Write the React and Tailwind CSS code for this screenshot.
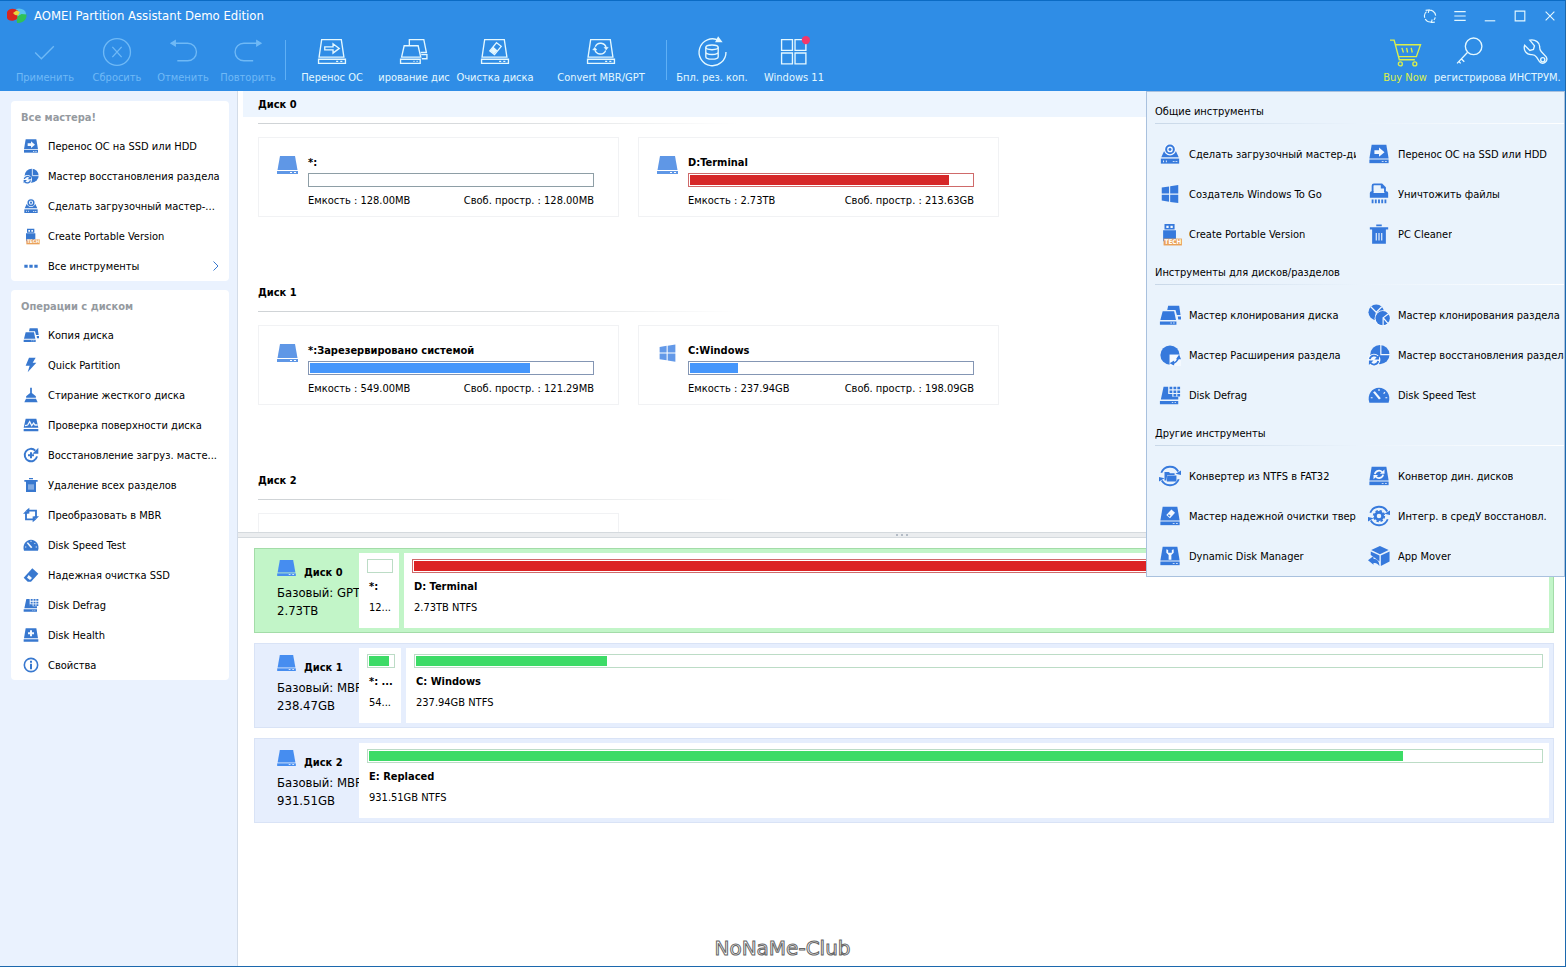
import React from "react";

const WHITE = "#f4f9ff";

const Drive = ({ children }) => (
  <>
    <path d="M4 2h16l2.500 15h-21z" fill="currentColor" />
    <path d="M1.500 18h21v4h-21z" fill="currentColor" />
    <path d="M15 19.500h2v1h-2zM18.500 19.500h2v1h-2z" fill={WHITE} />
    {children}
  </>
);

const Tech = () => (
  <>
    <rect x="5" y="17" width="20" height="7.500" fill="#eaa25a" />
    <text x="6" y="23.200" fontSize="7" fontWeight="bold" fill="#fff">
      TECH
    </text>
  </>
);

const glyphs = {
  transfer: (
    <Drive>
      <path d="M7 8h5V5l6 5-6 5v-3H7z" fill={WHITE} />
    </Drive>
  ),
  recovery: (
    <>
      <circle cx="13" cy="11.500" r="10.500" fill="currentColor" />
      <path d="M14 0v11.500h10" fill="none" stroke={WHITE} strokeWidth="1.300" />
      <circle cx="6.500" cy="17.500" r="7" fill={WHITE} />
      <path d="M2 16.500a4.800 4.800 0 0 1 8.500-2M11.200 18.500a4.800 4.800 0 0 1-8.500 2" fill="none" stroke="currentColor" strokeWidth="1.900" />
      <path d="M12 12v5H7zM1 23v-5h5z" fill="currentColor" />
    </>
  ),
  bootable: (
    <>
      <path d="M5.500 9L2.500 15.500h19L18.500 9z" fill="currentColor" />
      <circle cx="12" cy="7" r="6.500" fill={WHITE} />
      <circle cx="12" cy="7" r="4.200" fill="none" stroke="currentColor" strokeWidth="2.200" />
      <circle cx="12" cy="7" r="1.600" fill="currentColor" />
      <path d="M2 17h20v5.500H2z" fill="currentColor" />
      <path d="M4.500 19h1v2h-1zM7.500 19h1v2h-1zM15 19.500h2v1h-2zM18 19.500h2v1h-2z" fill={WHITE} />
    </>
  ),
  windows: (
    <path d="M3 5l8-1.200v7.700H3zM12.200 3.600L21 2.300v9.200h-8.800zM3 12.700h8v7.700L3 19.200zM12.200 12.700H21v9.200l-8.800-1.300z" fill="currentColor" />
  ),
  portable: (
    <>
      <path d="M6 1h11v6H6zM4.500 8h14v12h-14z" fill="currentColor" />
      <path d="M8 3h2.500v2.500H8zM12.500 3H15v2.500h-2.500z" fill={WHITE} />
      <Tech />
    </>
  ),
  shredder: (
    <>
      <path d="M5 10V3a1.500 1.500 0 0 1 1.500-1.500H15L18.500 5v5" fill="none" stroke="currentColor" strokeWidth="2" />
      <path d="M14 1v5h5z" fill="currentColor" />
      <path d="M4 9h2v2h12V9h2a2 2 0 0 1 2 2v5H2v-5a2 2 0 0 1 2-2z" fill="currentColor" />
      <path d="M5 18v4M8.500 18v4M12 18v4M15.500 18v4M19 18v4" stroke="currentColor" strokeWidth="2" />
    </>
  ),
  trash: (
    <>
      <path d="M9 1.500h6v2H9zM2 4.500h20v2.500H2zM4.500 7h15v15.500h-15z" fill="currentColor" />
      <path d="M9 11v8M12 11v8M15 11v8" stroke={WHITE} strokeWidth="1.200" />
    </>
  ),
  cloneDisk: (
    <>
      <path d="M10 2h12l1.500 10h-4L18 6.500H9zM20.500 13.500H24V17h-3z" fill="currentColor" />
      <path d="M4 8h12.500l2 9.500H1.500zM1 19h18v3.500H1z" fill="currentColor" />
      <path d="M12.500 20.200h1.500v1h-1.500zM15.500 20.200H17v1h-1.500z" fill={WHITE} />
    </>
  ),
  clonePartition: (
    <>
      <circle cx="9" cy="9" r="8.500" fill="currentColor" />
      <path d="M9 9L3 3M9 9l6-6M9 9v9" stroke={WHITE} strokeWidth="1.300" />
      <circle cx="16" cy="15.500" r="8.800" fill={WHITE} />
      <circle cx="16" cy="15.500" r="7.800" fill="currentColor" />
      <path d="M23 10l-6.500 5L22 21.500M16.500 15v9" fill="none" stroke={WHITE} strokeWidth="1.300" />
    </>
  ),
  extend: (
    <>
      <circle cx="12" cy="12" r="10.500" fill="currentColor" />
      <path d="M11.500 11.500H24V24H11.500z" fill={WHITE} />
      <path d="M14 21.500a10 10 0 0 0 7.500-7.500" fill="none" stroke="currentColor" strokeWidth="1.700" />
      <path d="M11.500 21l5-3v5.500zM22 11.500l2 5h-5.500z" fill="currentColor" />
    </>
  ),
  defrag: (
    <>
      <path d="M5 3h5v11h11v3H2zM1 18.500h20v3.500H1z" fill="currentColor" />
      <path d="M11.500 3h3v2.800h-3zM15.800 3h3v2.800h-3zM20 3h3v2.800h-3zM11.500 7h3v2.800h-3zM15.800 7h3v2.800h-3zM20 7h3v2.800h-3zM15.800 11h3v2.500h-3zM20 11h3v2.500h-3zM9.500 11h5v4h-5z" fill="currentColor" />
      <path d="M14 19.800h1.500v1H14zM17 19.800h1.500v1H17z" fill={WHITE} />
    </>
  ),
  speed: (
    <>
      <path d="M1.500 20.500c-3-9 3-16.500 10.500-16.500s13.500 7.500 10.500 16.500z" fill="currentColor" />
      <path d="M5.500 9l2-1 6.500 7.500-2 1.500z" fill={WHITE} />
      <path d="M12 5.500v2M18.500 9L17 10.500M21 15h-2M3 15h2" stroke={WHITE} strokeWidth="1.300" />
    </>
  ),
  convertFolder: (
    <>
      <path d="M2.500 8.500A10.300 10.300 0 0 1 21 7M21.500 15.500A10.300 10.300 0 0 1 3 17" fill="none" stroke="currentColor" strokeWidth="2" />
      <path d="M18 9.500l6-3.500v5zM6 14.500L0 18v-5z" fill="currentColor" />
      <path d="M6 7.500h5l1 1.500h5v2H9l-1 6H6z" fill="currentColor" />
      <path d="M9 11.500h10V18H8.500z" fill="currentColor" />
    </>
  ),
  convertDisk: (
    <Drive>
      <path d="M7.500 10A4.500 4.500 0 0 1 15.500 8M16.500 10.500a4.500 4.500 0 0 1-8 2" fill="none" stroke={WHITE} strokeWidth="1.900" />
      <path d="M13 9.500h5V5zM11 11H6v4.500z" fill={WHITE} />
    </Drive>
  ),
  wipeDisk: (
    <Drive>
      <path d="M13.500 5l4 3.500-5.500 6-4-3.500z" fill={WHITE} />
      <path d="M10.800 10l1.800 1.600-1.200 1.200-1.700-1.500z" fill="currentColor" />
    </Drive>
  ),
  integrate: (
    <>
      <path d="M2.500 8.500A10.300 10.300 0 0 1 21 7M21.500 15.500A10.300 10.300 0 0 1 3 17" fill="none" stroke="currentColor" strokeWidth="2" />
      <path d="M18 9.500l6-3.500v5zM6 14.500L0 18v-5z" fill="currentColor" />
      <circle cx="12" cy="12" r="4" fill="none" stroke="currentColor" strokeWidth="3" />
      <circle cx="12" cy="12" r="5.800" fill="none" stroke="currentColor" strokeWidth="1.800" strokeDasharray="2.600 1.950" />
    </>
  ),
  dynamic: (
    <Drive>
      <path d="M8 4.500v4L10.500 11v5h3v-5L16 8.500v-4l-2 1v3h-4v-3z" fill={WHITE} />
    </Drive>
  ),
  mover: (
    <>
      <path d="M13 1l9.500 4.500L13 10 3.500 5.500zM23.500 7v11L14 23V11.500zM3 7l9.500 4.500V18L8 14.500 3 11z" fill="currentColor" />
      <path d="M0 16.500L6 12v3c4 0 6.500 3 6.500 8-2-3-4-3.500-6.500-3.500v2z" fill="currentColor" />
    </>
  ),
  bolt: <path d="M9 1h10l-4.500 7.500H20L7 23l3-10H4z" fill="currentColor" />,
  broom: (
    <path d="M10.700 1h2.600v8l6 5v2H4.700v-2l6-5zM4.500 17.500h15L22 23H2z" fill="currentColor" />
  ),
  surface: (
    <>
      <path d="M4 2.500h16L23 16H1zM1 18h22v3.500H1z" fill="currentColor" />
      <path d="M3 13l4-1 3-5 3 6 3-4 2 3h4" fill="none" stroke={WHITE} strokeWidth="1.900" />
    </>
  ),
  bootRepair: (
    <>
      <path d="M18.500 5.500A9.300 9.300 0 1 0 21 14" fill="none" stroke="currentColor" strokeWidth="2.900" />
      <path d="M23 1v9h-9zM10.500 8h3v3h3v3h-3v3h-3v-3h-3v-3h3z" fill="currentColor" />
    </>
  ),
  convertMbr: (
    <>
      <path d="M9 5.500h10.500V15M15 18.500H4.500V8" fill="none" stroke="currentColor" strokeWidth="2.800" />
      <path d="M9.500 1v9L4 5.500zM14.500 14v9l5.500-4.500zM15 14h9l-4.500 4.500zM0 10h9L4.500 5.500z" fill="currentColor" />
    </>
  ),
  eraser: (
    <>
      <path d="M14 2l9 8-11 12H7l-6-6z" fill="currentColor" />
      <path d="M8.500 12l5 4.500-3 3L6 16z" fill={WHITE} />
    </>
  ),
  health: (
    <>
      <path d="M4 2h16l2.500 15h-21zM1 18.500h22V22H1z" fill="currentColor" />
      <path d="M10.500 5h3v3h3v3h-3v3h-3v-3h-3V8h3z" fill={WHITE} />
    </>
  ),
  info: (
    <>
      <circle cx="12" cy="12" r="10" fill="none" stroke="currentColor" strokeWidth="2.400" />
      <path d="M10.500 5.500h3v3h-3zM10.500 10h3v8.500h-3z" fill="currentColor" />
    </>
  ),
  dots: <path d="M2 10h5v4.500H2zM9.500 10h5v4.500h-5zM17 10h5v4.500h-5z" fill="currentColor" />,
};

const Glyph = ({ name, className }) => (
  <svg viewBox="0 0 24 24" className={`overflow-visible ${className}`} aria-hidden="true">
    {glyphs[name]}
  </svg>
);

const LineDrive = ({ children }) => (
  <>
    <path d="M4.500 2.500h19l2.500 17H2zM1.500 21.500h26v4h-26z" />
    <path d="M18.500 23.500h2M22.500 23.500h2" />
    {children}
  </>
);

const lineGlyphs = {
  apply: <path d="M5 15l6 6L23 9" />,
  discard: (
    <>
      <circle cx="14.500" cy="14.500" r="13" />
      <path d="M10 9.500l9 10M19 9.500l-9 10" />
    </>
  ),
  undo: (
    <>
      <path d="M6 6h13a8.500 8.500 0 0 1 0 17H9" />
      <path d="M7 3.500v5L3 6z" fill="currentColor" />
    </>
  ),
  redo: (
    <>
      <path d="M24 6H10.500a8.500 8.500 0 0 0 0 17h9" />
      <path d="M23 3.500v5l4-2.500z" fill="currentColor" />
    </>
  ),
  transfer: (
    <LineDrive>
      <path d="M7.500 9.500h8v-3l6 4.500-6 4.500v-3h-8z" />
    </LineDrive>
  ),
  clone: (
    <>
      <path d="M5 8.500h13.500l2.500 11H2.500zM1.500 21.500h19v4h-19zM14 23.500h1M17 23.500h1M10 8V2.500h14l2.500 12.500H21M21.500 17h5.500v4h-5" />
    </>
  ),
  wipe: (
    <LineDrive>
      <path d="M16 5.500l4.500 3.500-6.500 8-4.500-3.500z" />
      <path d="M13 10.500l3 2.500-2.500 2.500-2.500-2z" fill="currentColor" />
    </LineDrive>
  ),
  convert: (
    <LineDrive>
      <path d="M9 9.500a5.500 5.500 0 0 1 10.500 1M19 13a5.500 5.500 0 0 1-10.500-1" />
      <path d="M17.500 10h4l-2 2.500zM6.500 12.500h4l-2-2.500z" fill="currentColor" strokeWidth=".5" />
    </LineDrive>
  ),
  backup: (
    <>
      <path d="M21 3.200A13 13 0 1 0 28 14.500" />
      <path d="M18.500 4.500h5L20.500.500z" fill="currentColor" />
      <ellipse cx="14.500" cy="10" rx="6" ry="2.300" />
      <path d="M8.500 10v9c0 3.200 12 3.200 12 0v-9M8.500 14.500c0 3.200 12 3.200 12 0" />
    </>
  ),
  win11: (
    <>
      <path d="M2.500 2.500H13V13H2.500zM15.500 2.500H26V13H15.500zM2.500 15.500H13V26H2.500zM15.500 15.500H26V26H15.500z" />
      <circle cx="26" cy="3" r="4" fill="#f2386b" stroke="none" />
    </>
  ),
  cart: (
    <>
      <path d="M0 3h4l5 19h15M5 7.500h24.500l-4 11.500H8.500M11.500 10.500l1.500 4.500M16 10.500l1 4.500M20.500 10.500l1 4.500" />
      <circle cx="10" cy="26" r="1.900" />
      <circle cx="24" cy="26" r="1.900" />
    </>
  ),
  key: (
    <>
      <circle cx="18" cy="9" r="8" />
      <path d="M12 15L2 25.500M6 21l3 3M3.500 23.500l2 2" />
    </>
  ),
  wrench: (
    <>
      <path d="M9.500 3l4.500 5.500-1 3.500-3.500 1-5-5c-1.500 4.500 1.500 9.500 7 9 2 0 3.500 1 4.500 2.500l3 4.500a4 4 0 0 0 6.500-4.500L20.500 14c-1-1-1.500-2-1.500-4 .500-4.500-4-8-9.500-7z" />
      <circle cx="22" cy="22" r="2" />
    </>
  ),
};

const ToolButton = ({ icon, label, width, tone = "text-[#e4f8ff]" }) => (
  <button className={`flex shrink-0 flex-col items-center ${width} ${tone}`}>
    <svg
      viewBox="0 0 29 29"
      className="size-[30px] overflow-visible"
      fill="none"
      stroke="currentColor"
      strokeWidth="1.300"
      aria-hidden="true"
    >
      {lineGlyphs[icon]}
    </svg>
    <span className="mt-[3px] h-4 w-full overflow-hidden text-center leading-4 whitespace-nowrap">
      {label}
    </span>
  </button>
);

const wizards = [
  ["transfer", "Перенос ОС на SSD или HDD"],
  ["recovery", "Мастер восстановления раздела"],
  ["bootable", "Сделать загрузочный мастер-..."],
  ["portable", "Create Portable Version"],
  ["dots", "Все инструменты"],
];

const operations = [
  ["cloneDisk", "Копия диска"],
  ["bolt", "Quick Partition"],
  ["broom", "Стирание жесткого диска"],
  ["surface", "Проверка поверхности диска"],
  ["bootRepair", "Восстановление загруз. масте..."],
  ["trash", "Удаление всех разделов"],
  ["convertMbr", "Преобразовать в MBR"],
  ["speed", "Disk Speed Test"],
  ["eraser", "Надежная очистка SSD"],
  ["defrag", "Disk Defrag"],
  ["health", "Disk Health"],
  ["info", "Свойства"],
];

const toolSections = [
  {
    title: "Общие инструменты",
    items: [
      ["bootable", "Сделать загрузочный мастер-ди"],
      ["transfer", "Перенос ОС на SSD или HDD"],
      ["windows", "Создатель Windows To Go"],
      ["shredder", "Уничтожить файлы"],
      ["portable", "Create Portable Version"],
      ["trash", "PC Cleaner"],
    ],
  },
  {
    title: "Инструменты для дисков/разделов",
    items: [
      ["cloneDisk", "Мастер клонирования диска"],
      ["clonePartition", "Мастер клонирования раздела"],
      ["extend", "Мастер Расширения раздела"],
      ["recovery", "Мастер восстановления раздела"],
      ["defrag", "Disk Defrag"],
      ["speed", "Disk Speed Test"],
    ],
  },
  {
    title: "Другие инструменты",
    items: [
      ["convertFolder", "Конвертер из NTFS в FAT32"],
      ["convertDisk", "Конветор дин. дисков"],
      ["wipeDisk", "Мастер надежной очистки тверд"],
      ["integrate", "Интегр. в средУ восстановл."],
      ["dynamic", "Dynamic Disk Manager"],
      ["mover", "App Mover"],
    ],
  },
];

const disks = [
  {
    name: "Диск 0",
    volumes: [
      { name: "*:", size: "128.00MB", free: "128.00MB", used: 0, border: "border-[#8e9ea6]", fill: "bg-[#4596fb]" },
      { name: "D:Terminal", size: "2.73TB", free: "213.63GB", used: 92, border: "border-[#cf6a6a]", fill: "bg-[#d62728]" },
    ],
  },
  {
    name: "Диск 1",
    volumes: [
      { name: "*:Зарезервировано системой", size: "549.00MB", free: "121.29MB", used: 78, border: "border-[#8496b4]", fill: "bg-[#4596fb]" },
      { name: "C:Windows", size: "237.94GB", free: "198.09GB", used: 17, border: "border-[#8496b4]", fill: "bg-[#4596fb]", system: true },
    ],
  },
  {
    name: "Диск 2",
    volumes: [{}],
  },
];

const layouts = [
  {
    name: "Диск 0",
    type: "Базовый: GPT",
    size: "2.73TB",
    selected: true,
    parts: [
      { name: "*:", info: "12...", used: 0, width: "w-10" },
      { name: "D: Terminal", info: "2.73TB NTFS", used: 92, width: "flex-1", full: true },
    ],
  },
  {
    name: "Диск 1",
    type: "Базовый: MBR",
    size: "238.47GB",
    parts: [
      { name: "*: ...", info: "54...", used: 82, width: "w-[42px]" },
      { name: "C: Windows", info: "237.94GB NTFS", used: 17, width: "flex-1" },
    ],
  },
  {
    name: "Диск 2",
    type: "Базовый: MBR",
    size: "931.51GB",
    parts: [{ name: "E: Replaced", info: "931.51GB NTFS", used: 88.2, width: "flex-1" }],
  },
];

const UsageBar = ({ used, border, fill }) => (
  <div className={`h-[14px] border bg-white p-px ${border}`}>
    <div className={`h-full ${fill}`} style={{ width: `${used}%` }} />
  </div>
);

const DiskIcon = ({ className }) => (
  <svg viewBox="0 0 21 18" className={className} aria-hidden="true">
    <path d="M3 0h15l2.500 14H.500z" fill="currentColor" />
    <path d="M0 15h21v3H0z" fill="currentColor" />
    <path d="M13 16h2v1h-2zM17 16h2v1h-2z" fill="#fff" />
  </svg>
);

const SideCard = ({ title, items }) => (
  <section className="rounded-sm bg-white">
    <h2 className="h-[30px] pt-[9px] pl-[10px] leading-4 font-bold text-[#959a9f]">{title}</h2>
    {items.map(([icon, label]) => (
      <button key={label} className="flex h-[30px] w-full items-center pl-3 text-left">
        <Glyph name={icon} className="size-4 shrink-0 text-[#3878cf]" />
        <span className="ml-[9px] flex-1 pt-[2px] whitespace-nowrap">{label}</span>
        {icon === "dots" && (
          <svg viewBox="0 0 8 12" className="mr-[9px] h-3 w-2" fill="none" stroke="#3878cf" aria-hidden="true">
            <path d="M1.500 1.500L6 6l-4.500 4.500" />
          </svg>
        )}
      </button>
    ))}
  </section>
);

const VolumeCard = ({ volume }) => (
  <article className="flex h-20 w-[361px] border border-[#f1f2f4] pt-[14px] pl-[18px]">
    {volume.name && (
      <>
        {volume.system ? (
          <Glyph name="windows" className="mt-[2px] h-[22px] w-[21px] text-[#6399e8]" />
        ) : (
          <DiskIcon className="mt-1 h-[18px] w-[21px] text-[#5f97e6]" />
        )}
        <div className="ml-[10px] w-[286px]">
          <h3 className="mb-px h-5 leading-[22px] font-bold">{volume.name}</h3>
          <UsageBar {...volume} />
          <p className="mt-[6px] flex justify-between leading-4">
            <span>Емкость : {volume.size}</span>
            <span>Своб. простр. : {volume.free}</span>
          </p>
        </div>
      </>
    )}
  </article>
);

const DiskLayout = ({ disk }) => (
  <section
    className={`flex h-[85px] gap-[5px] border p-1 ${
      disk.selected ? "border-[#a3dca8] bg-[#c2f5c8]" : "border-[#d9e3f6] bg-[#e6eefd]"
    }`}
  >
    <div className="-mr-[5px] w-[100px] shrink-0 overflow-hidden pt-[7px] pl-[18px]">
      <div className="flex h-6">
        <DiskIcon className="h-4 w-[19px] text-[#468df0]" />
        <h3 className="mt-[5px] ml-2 leading-4 font-bold whitespace-nowrap">{disk.name}</h3>
      </div>
      <p className="text-[13px] leading-[18px] whitespace-nowrap">{disk.type}</p>
      <p className="text-[13px] leading-[18px] whitespace-nowrap">{disk.size}</p>
    </div>
    {disk.parts.map((part) => (
      <div key={part.name} className={`min-w-0 bg-white px-[6px] pt-[6px] pl-2 ${part.width}`}>
        <UsageBar
          used={part.used}
          border={part.full ? "border-[#cf6a6a]" : "border-[#bcdcc6]"}
          fill={part.full ? "bg-[#dc2224]" : "bg-[#3cdb66]"}
        />
        <h4 className="mt-[6px] pl-[2px] leading-4 font-bold whitespace-nowrap">{part.name}</h4>
        <p className="mt-[5px] pl-[2px] leading-4 whitespace-nowrap">{part.info}</p>
      </div>
    ))}
  </section>
);

const ToolsMenu = () => (
  <div className="absolute top-0 right-0 w-[419px] border border-[#a9c1de] bg-[#eaf3fc] pt-px pl-2">
    {toolSections.map((section) => (
      <section key={section.title}>
        <h2 className="h-[30px] pt-[11px] leading-4">{section.title}</h2>
        <div className="mb-[10px] h-px bg-linear-to-r from-[#c9d8e8] via-[#eaf3fc] to-white" />
        <div className="grid grid-cols-[201px_1fr] gap-x-2">
          {section.items.map(([icon, label]) => (
            <button key={label} className="flex h-10 min-w-0 items-center overflow-hidden pl-1 text-left">
              <Glyph name={icon} className="size-[22px] shrink-0 text-[#3679dc]" />
              <span className="ml-2 overflow-hidden pt-[2px] whitespace-nowrap">{label}</span>
            </button>
          ))}
        </div>
      </section>
    ))}
  </div>
);

const AppLogo = () => (
  <svg viewBox="0 0 20 18" className="h-[18px] w-5" aria-hidden="true">
    <ellipse cx="12" cy="7" rx="7" ry="5.500" fill="#59c3ee" />
    <path d="M19.500 7.500c.500 5-3.500 9-9.500 8.500l-.500-6 5-3z" fill="#2fc257" />
    <path d="M0 5c2-4 8-4 11-1l-1 8c-4 3-9 2-10-1z" fill="#d8271f" />
    <path d="M6 6l3.500-2.500L13 5l-2 3.500-3-.500z" fill="#e8d63c" />
  </svg>
);

const App = () => {
  const faded = "text-[#6fb9f6]";

  return (
    <div className="relative flex min-h-screen flex-col border-r border-b border-[#1c68ad] bg-white font-['DejaVu_Sans_Condensed','DejaVu_Sans',sans-serif] text-[11px] text-black">
      <header className="border-t border-[#0b6bc4] bg-[#2f8de6]">
        <div className="flex h-[30px] items-center pr-2 pl-[7px] text-white">
          <AppLogo />
          <h1 className="ml-[7px] flex-1 text-[13px]">AOMEI Partition Assistant Demo Edition</h1>
          <div className="flex items-center gap-4">
            {[
              ["Обновить", "M2 10a6.500 6.500 0 0 1 2-7M6 1.500a7 7 0 0 1 8.500 6M14 9.500a6.500 6.500 0 0 1-1.500 3M10.500 14.500a7 7 0 0 1-8-3M3 1.500l4-.500-1 3.500M13.500 15l-4 .500 1-3.500"],
              ["Меню", "M1.500 3h13M1.500 8h13M1.500 13h13"],
              ["Свернуть", "M2 13.500h12"],
              ["Развернуть", "M2.500 2.500h11v11h-11z"],
              ["Закрыть", "M3 3l10 10M13 3L3 13"],
            ].map(([label, d]) => (
              <button key={label} aria-label={label}>
                <svg viewBox="0 0 16 16" className="size-[14px]" fill="none" stroke="#e4f8ff" strokeWidth="1.300">
                  <path d={d} />
                </svg>
              </button>
            ))}
          </div>
        </div>
        <div className="flex h-[60px] items-start pt-[6px] pr-[1px] pl-[9px]">
          <ToolButton icon="apply" label="Применить" width="w-[72px]" tone={faded} />
          <ToolButton icon="discard" label="Сбросить" width="w-[72px]" tone={faded} />
          <ToolButton icon="undo" label="Отменить" width="w-[60px]" tone={faded} />
          <ToolButton icon="redo" label="Повторить" width="w-[70px]" tone={faded} />
          <div className="mx-[2px] mt-[3px] h-10 w-px bg-[#5fb0f6]" />
          <ToolButton icon="transfer" label="Перенос ОС" width="w-[88px]" />
          <ToolButton icon="clone" label="ирование дис" width="w-[76px]" />
          <ToolButton icon="wipe" label="Очистка диска" width="w-[86px]" />
          <ToolButton icon="convert" label="Convert MBR/GPT" width="w-[126px]" />
          <div className="mt-[3px] ml-[2px] h-10 w-px bg-[#5fb0f6]" />
          <ToolButton icon="backup" label="Бпл. рез. коп." width="w-[90px]" />
          <ToolButton icon="win11" label="Windows 11" width="w-[74px]" />
          <div className="flex-1" />
          <ToolButton icon="cart" label="Buy Now" width="w-[58px]" tone="text-[#dcf04a]" />
          <ToolButton icon="key" label="регистрирова" width="w-[72px]" />
          <ToolButton icon="wrench" label="ИНСТРУМ." width="w-[58px]" />
        </div>
      </header>

      <div className="relative flex flex-1">
        <aside className="flex w-[238px] shrink-0 flex-col gap-[9px] border-r border-[#d3dce8] bg-[#eaf2fe] pt-[10px] pr-2 pl-[11px]">
          <SideCard title="Все мастера!" items={wizards} />
          <SideCard title="Операции с диском" items={operations} />
        </aside>

        <main className="min-w-0 flex-1">
          {/* Volume list */}
          <div className="h-[441px] overflow-hidden">
            {disks.map((disk, index) => (
              <section key={disk.name} className="h-[188px]">
                <h2
                  className={`ml-[5px] h-[26px] pl-[15px] leading-7 font-bold ${
                    index === 0 ? "bg-[#edf5fe]" : ""
                  }`}
                >
                  {disk.name}
                </h2>
                <div className="mt-[6px] ml-5 h-px w-[480px] bg-linear-to-r from-[#cfd3d6] via-[#d9dcde] to-white" />
                <div className="mt-[13px] ml-5 flex gap-[19px]">
                  {disk.volumes.map((volume, i) => (
                    <VolumeCard key={i} volume={volume} />
                  ))}
                </div>
              </section>
            ))}
          </div>

          <div className="flex h-[6px] items-center justify-center gap-[3px] border-y border-[#d5dade] bg-[#ebedef]">
            <span className="size-[2px] bg-[#b4bcc6]" />
            <span className="size-[2px] bg-[#b4bcc6]" />
            <span className="size-[2px] bg-[#b4bcc6]" />
          </div>

          {/* Disk map */}
          <div className="flex flex-col gap-[10px] pt-[10px] pr-[11px] pl-4">
            {layouts.map((disk) => (
              <DiskLayout key={disk.name} disk={disk} />
            ))}
          </div>
        </main>

        <ToolsMenu />
      </div>

      <p className="absolute inset-x-0 bottom-1 text-center font-['DejaVu_Sans',sans-serif] text-[20px] leading-7 text-white [-webkit-text-stroke:1px_#666]">
        NoNaMe-Club
      </p>
    </div>
  );
};

export default App;
